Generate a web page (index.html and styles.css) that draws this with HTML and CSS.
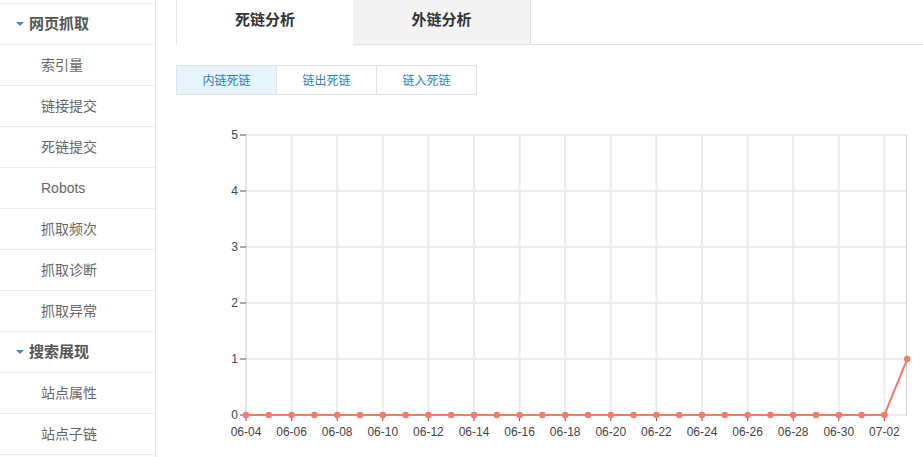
FILE: index.html
```html
<!DOCTYPE html>
<html lang="zh-CN">
<head>
<meta charset="utf-8">
<title>死链分析</title>
<link rel="stylesheet" href="styles.css">
</head>
<body>
<div class="page">
  <aside class="sidebar">
    <ul class="menu">
      <li class="menu-head"><span class="caret"></span>网页抓取</li>
      <li class="menu-item">索引量</li>
      <li class="menu-item">链接提交</li>
      <li class="menu-item">死链提交</li>
      <li class="menu-item">Robots</li>
      <li class="menu-item">抓取频次</li>
      <li class="menu-item">抓取诊断</li>
      <li class="menu-item">抓取异常</li>
      <li class="menu-head"><span class="caret"></span>搜索展现</li>
      <li class="menu-item">站点属性</li>
      <li class="menu-item">站点子链</li>
    </ul>
  </aside>
  <main class="main">
    <div class="tabs">
      <div class="tab tab-active">死链分析</div>
      <div class="tab tab-idle">外链分析</div>
    </div>
    <div class="subtabs">
      <div class="subtab subtab-active">内链死链</div>
      <div class="subtab">链出死链</div>
      <div class="subtab">链入死链</div>
    </div>
    <svg class="chart" width="747" height="330" viewBox="0 0 747 330">
      <g class="grid">
        <line x1="70" y1="15" x2="731" y2="15"/>
        <line x1="70" y1="71" x2="731" y2="71"/>
        <line x1="70" y1="127" x2="731" y2="127"/>
        <line x1="70" y1="183" x2="731" y2="183"/>
        <line x1="70" y1="239" x2="731" y2="239"/>
        <line x1="70" y1="295" x2="731" y2="295"/>
        <line x1="115.6" y1="15" x2="115.6" y2="295"/>
        <line x1="161.2" y1="15" x2="161.2" y2="295"/>
        <line x1="206.8" y1="15" x2="206.8" y2="295"/>
        <line x1="252.4" y1="15" x2="252.4" y2="295"/>
        <line x1="298" y1="15" x2="298" y2="295"/>
        <line x1="343.6" y1="15" x2="343.6" y2="295"/>
        <line x1="389.2" y1="15" x2="389.2" y2="295"/>
        <line x1="434.8" y1="15" x2="434.8" y2="295"/>
        <line x1="480.4" y1="15" x2="480.4" y2="295"/>
        <line x1="526" y1="15" x2="526" y2="295"/>
        <line x1="571.6" y1="15" x2="571.6" y2="295"/>
        <line x1="617.2" y1="15" x2="617.2" y2="295"/>
        <line x1="662.8" y1="15" x2="662.8" y2="295"/>
        <line x1="708.4" y1="15" x2="708.4" y2="295"/>
      </g>
      <line class="axis" x1="70" y1="15" x2="70" y2="296"/>
      <line class="frame" x1="730.5" y1="15" x2="730.5" y2="296"/>
      <g class="ticks">
        <line x1="64" y1="15" x2="70" y2="15"/>
        <line x1="64" y1="71" x2="70" y2="71"/>
        <line x1="64" y1="127" x2="70" y2="127"/>
        <line x1="64" y1="183" x2="70" y2="183"/>
        <line x1="64" y1="239" x2="70" y2="239"/>
        <line x1="64" y1="295" x2="70" y2="295"/>
        <line x1="70" y1="295" x2="70" y2="301"/>
        <line x1="115.6" y1="295" x2="115.6" y2="301"/>
        <line x1="161.2" y1="295" x2="161.2" y2="301"/>
        <line x1="206.8" y1="295" x2="206.8" y2="301"/>
        <line x1="252.4" y1="295" x2="252.4" y2="301"/>
        <line x1="298" y1="295" x2="298" y2="301"/>
        <line x1="343.6" y1="295" x2="343.6" y2="301"/>
        <line x1="389.2" y1="295" x2="389.2" y2="301"/>
        <line x1="434.8" y1="295" x2="434.8" y2="301"/>
        <line x1="480.4" y1="295" x2="480.4" y2="301"/>
        <line x1="526" y1="295" x2="526" y2="301"/>
        <line x1="571.6" y1="295" x2="571.6" y2="301"/>
        <line x1="617.2" y1="295" x2="617.2" y2="301"/>
        <line x1="662.8" y1="295" x2="662.8" y2="301"/>
        <line x1="708.4" y1="295" x2="708.4" y2="301"/>
      </g>
      <g class="ylabels">
        <text x="62" y="19">5</text>
        <text x="62" y="75">4</text>
        <text x="62" y="131">3</text>
        <text x="62" y="187">2</text>
        <text x="62" y="243">1</text>
        <text x="62" y="299">0</text>
      </g>
      <g class="xlabels">
        <text x="70" y="316">06-04</text>
        <text x="115.6" y="316">06-06</text>
        <text x="161.2" y="316">06-08</text>
        <text x="206.8" y="316">06-10</text>
        <text x="252.4" y="316">06-12</text>
        <text x="298" y="316">06-14</text>
        <text x="343.6" y="316">06-16</text>
        <text x="389.2" y="316">06-18</text>
        <text x="434.8" y="316">06-20</text>
        <text x="480.4" y="316">06-22</text>
        <text x="526" y="316">06-24</text>
        <text x="571.6" y="316">06-26</text>
        <text x="617.2" y="316">06-28</text>
        <text x="662.8" y="316">06-30</text>
        <text x="708.4" y="316">07-02</text>
      </g>
      <polyline class="series" points="70,295 708.4,295 731.2,239"/>
      <g class="dots">
        <circle cx="70" cy="295" r="3.2"/>
        <circle cx="92.8" cy="295" r="3.2"/>
        <circle cx="115.6" cy="295" r="3.2"/>
        <circle cx="138.4" cy="295" r="3.2"/>
        <circle cx="161.2" cy="295" r="3.2"/>
        <circle cx="184" cy="295" r="3.2"/>
        <circle cx="206.8" cy="295" r="3.2"/>
        <circle cx="229.6" cy="295" r="3.2"/>
        <circle cx="252.4" cy="295" r="3.2"/>
        <circle cx="275.2" cy="295" r="3.2"/>
        <circle cx="298" cy="295" r="3.2"/>
        <circle cx="320.8" cy="295" r="3.2"/>
        <circle cx="343.6" cy="295" r="3.2"/>
        <circle cx="366.4" cy="295" r="3.2"/>
        <circle cx="389.2" cy="295" r="3.2"/>
        <circle cx="412" cy="295" r="3.2"/>
        <circle cx="434.8" cy="295" r="3.2"/>
        <circle cx="457.6" cy="295" r="3.2"/>
        <circle cx="480.4" cy="295" r="3.2"/>
        <circle cx="503.2" cy="295" r="3.2"/>
        <circle cx="526" cy="295" r="3.2"/>
        <circle cx="548.8" cy="295" r="3.2"/>
        <circle cx="571.6" cy="295" r="3.2"/>
        <circle cx="594.4" cy="295" r="3.2"/>
        <circle cx="617.2" cy="295" r="3.2"/>
        <circle cx="640" cy="295" r="3.2"/>
        <circle cx="662.8" cy="295" r="3.2"/>
        <circle cx="685.6" cy="295" r="3.2"/>
        <circle cx="708.4" cy="295" r="3.2"/>
        <circle cx="731.2" cy="239" r="3.2"/>
      </g>
    </svg>
  </main>
</div>
</body>
</html>
```

FILE: styles.css
```css
html, body {
  margin: 0;
  padding: 0;
  background: #fff;
}

body {
  font-family: "Liberation Sans", "Microsoft YaHei", "Noto Sans CJK SC", sans-serif;
  color: #333;
  overflow: hidden;
}

.page {
  display: flex;
  align-items: flex-start;
  width: 923px;
  height: 457px;
}

.sidebar {
  width: 156px;
  flex: none;
  height: 457px;
  border-right: 1px solid #e6e6e6;
  padding-top: 3px;
  box-sizing: border-box;
}

.menu {
  list-style: none;
  margin: 0;
  padding: 0;
  border-top: 1px solid #ececec;
}

.menu li {
  height: 40px;
  line-height: 40px;
  border-bottom: 1px solid #ececec;
  white-space: nowrap;
}

.menu-head {
  display: flex;
  align-items: center;
  padding-left: 16px;
  font-size: 15px;
  font-weight: bold;
  color: #555;
}

.caret {
  width: 0;
  height: 0;
  border-left: 4px solid transparent;
  border-right: 4px solid transparent;
  border-top: 4px solid #3d8ad0;
  margin-right: 5px;
  margin-top: -1px;
}

.menu-item {
  padding-left: 41px;
  font-size: 14px;
  color: #666;
}

.main {
  flex: 1;
  padding-left: 20px;
  display: flex;
  flex-direction: column;
  align-items: flex-start;
}

.tabs {
  display: flex;
  align-self: stretch;
  border-bottom: 1px solid #e2e2e2;
}

.tab {
  height: 44px;
  line-height: 38px;
  margin-bottom: -1px;
  text-align: center;
  font-size: 15px;
  font-weight: bold;
  color: #333;
  box-sizing: border-box;
  font-family: "Microsoft YaHei", "Noto Sans CJK SC", sans-serif;
}

.tab-active {
  width: 177px;
  height: 45px;
  background: #fff;
  border-left: 1px solid #e6e6e6;
}

.tab-idle {
  width: 178px;
  height: 45px;
  background: #f3f3f3;
  border-right: 1px solid #e2e2e2;
  border-bottom: 1px solid #e2e2e2;
}

.subtabs {
  display: flex;
  margin-top: 20px;
  border: 1px solid #dde4ea;
}

.subtab {
  width: 99px;
  height: 28px;
  line-height: 28px;
  text-align: center;
  font-size: 12px;
  color: #2f7fc4;
  background: #fff;
  font-family: "Microsoft YaHei", "Noto Sans CJK SC", sans-serif;
}

.subtab + .subtab {
  border-left: 1px solid #dde4ea;
}

.subtab-active {
  background: #e8f4fc;
}

.chart {
  display: block;
  margin-top: 25px;
  margin-left: 0;
}

.grid line {
  stroke: #ececec;
  stroke-width: 2;
}

.axis {
  stroke: #dcdcdc;
  stroke-width: 1.5;
}

.frame {
  stroke: #cfcfcf;
  stroke-width: 1;
}

.ticks line {
  stroke: #555;
  stroke-width: 1;
}

.ylabels text {
  font-family: "Liberation Sans", sans-serif;
  font-size: 12px;
  fill: #444;
  text-anchor: end;
}

.xlabels text {
  font-family: "Liberation Sans", sans-serif;
  font-size: 12px;
  fill: #444;
  text-anchor: middle;
}

.series {
  fill: none;
  stroke: #f57a6a;
  stroke-width: 2;
}

.dots circle {
  fill: #f57a6a;
}
```
